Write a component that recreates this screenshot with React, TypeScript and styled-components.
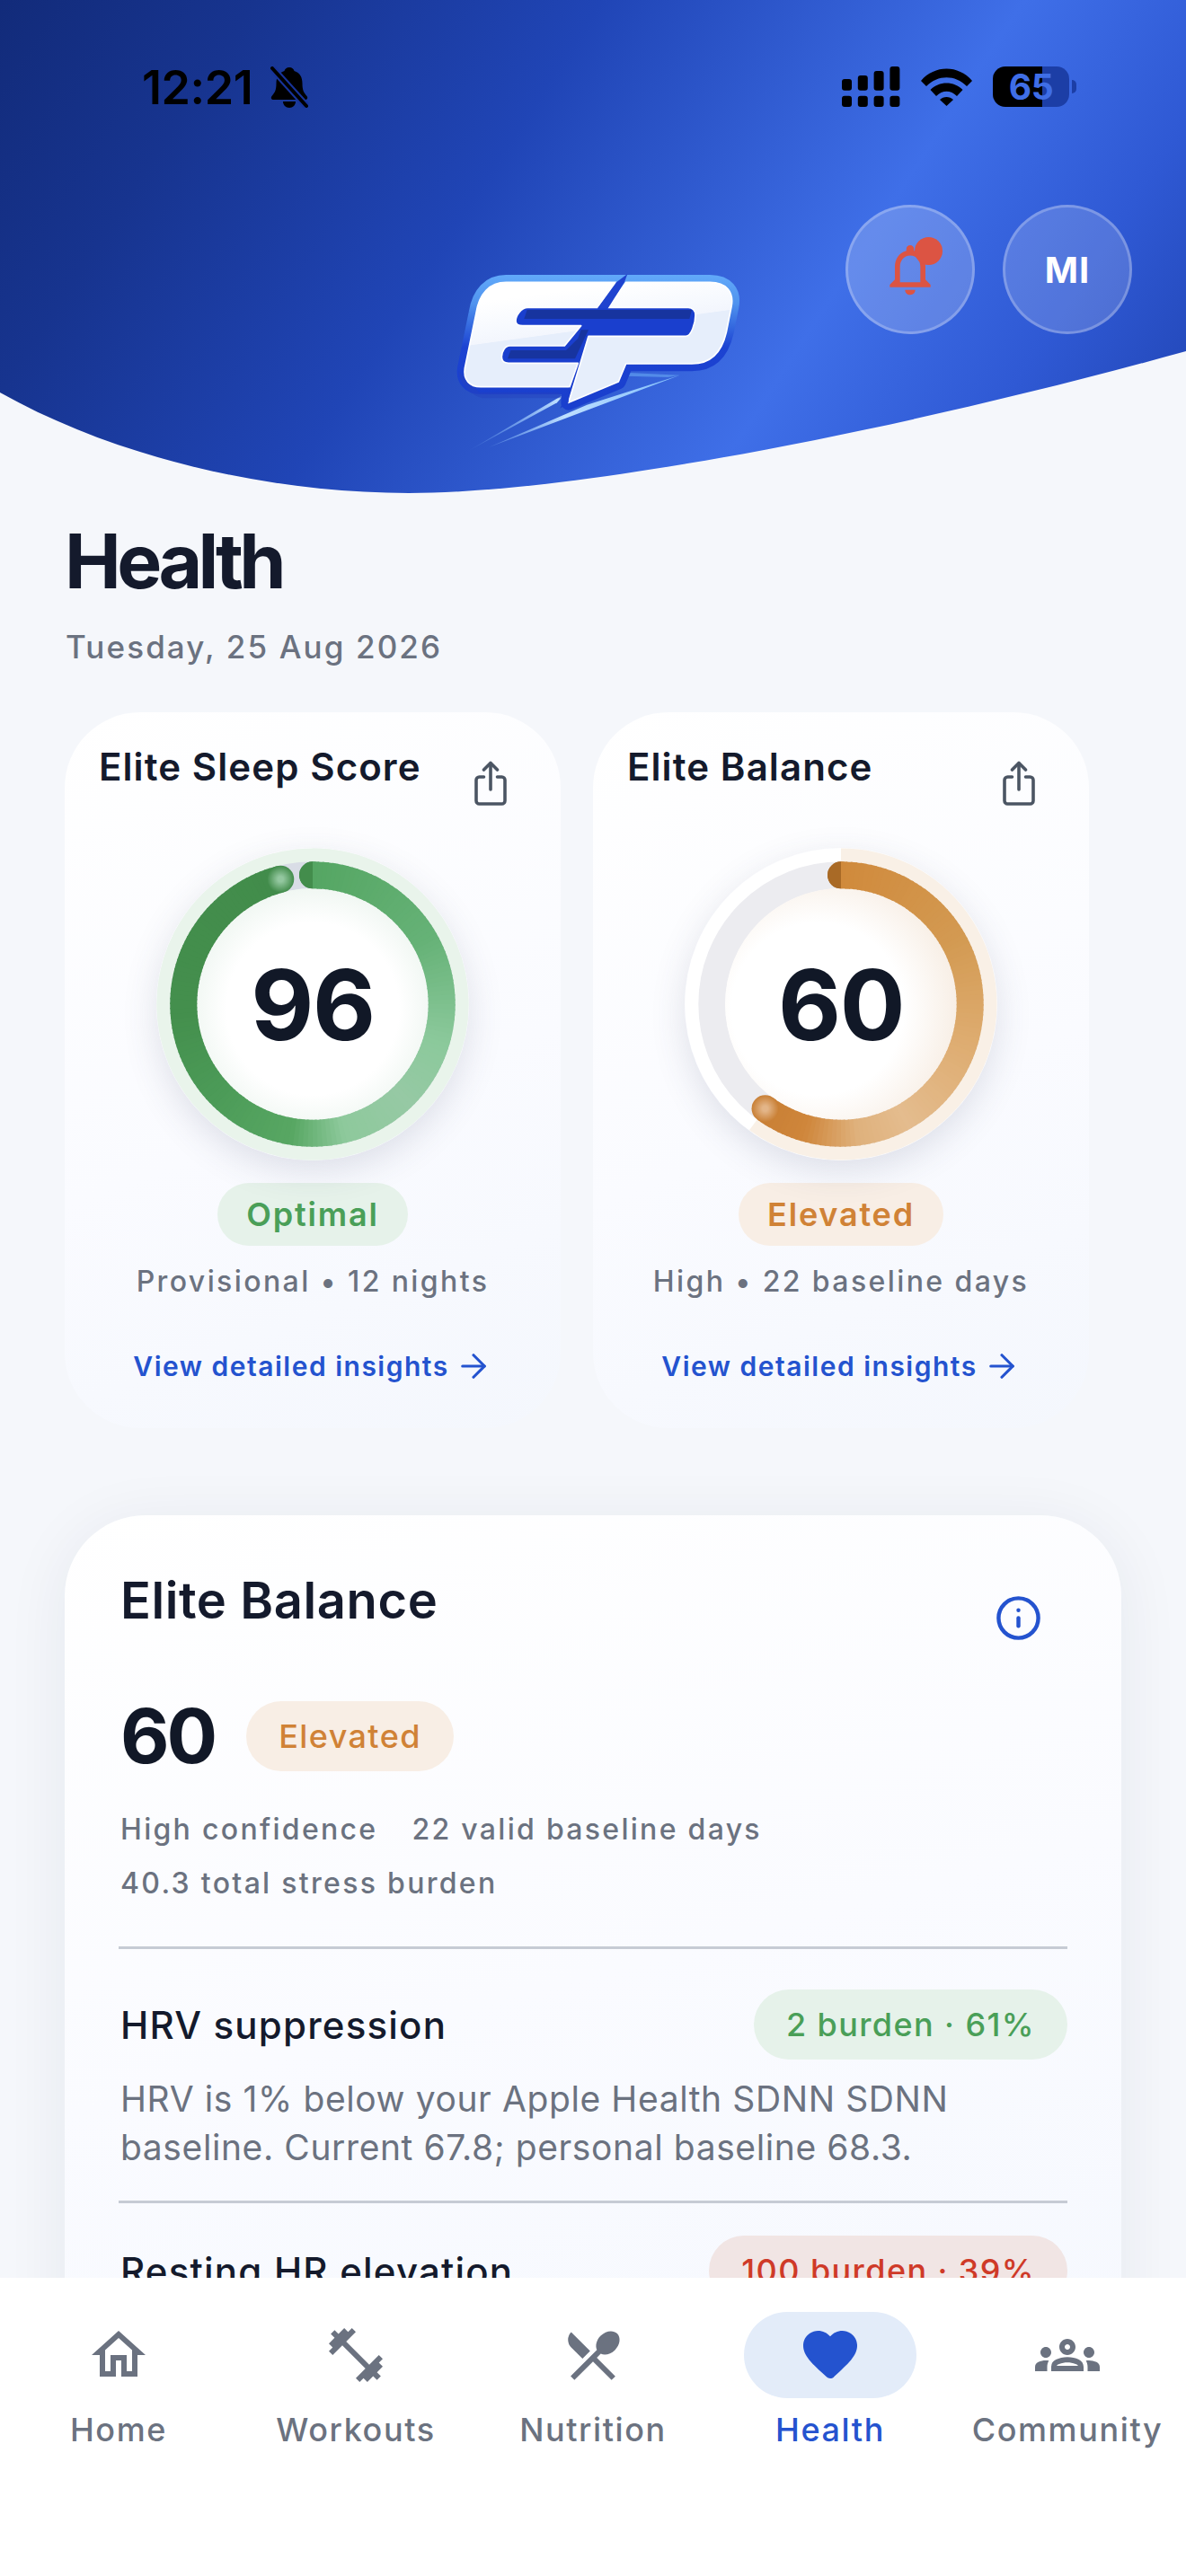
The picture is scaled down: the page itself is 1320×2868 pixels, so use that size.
import React from 'react';
import styled, { createGlobalStyle } from 'styled-components';
import { ArrowRight, Info } from 'lucide-react';
import {
  MdOutlineHome,
  MdOutlineFitnessCenter,
  MdOutlineRestaurantMenu,
  MdOutlineGroups,
  MdOutlineNotifications,
} from 'react-icons/md';

const GlobalStyle = createGlobalStyle`
  html, body {
    margin: 0;
    padding: 0;
    background: #f5f7fb;
    font-family: Inter, "Liberation Sans", sans-serif;
  }
  * { box-sizing: border-box; }
`;

const tones = {
  green: { text: '#4a9f58', bg: '#e6f2ea' },
  orange: { text: '#d08236', bg: '#f8eee5' },
  red: { text: '#cf3a28', bg: '#f1e5e4' },
};
type Tone = keyof typeof tones;

const Screen = styled.div`
  width: 1320px;
  height: 2868px;
  display: flex;
  flex-direction: column;
  overflow: hidden;
  background: #f5f7fb;
`;

const ScrollArea = styled.main`
  flex: 1;
  min-height: 0;
  overflow: hidden;
`;

const Header = styled.header`
  height: 549px;
  padding-top: 74px;
  background: linear-gradient(123deg, #122b7a 0%, #17348f 17%, #2045b6 40%, #3f6fe8 68%, #2f59d4 84%, #1f42b0 100%);
  clip-path: path('M0 0H1320V391C1000 480 640 549 455 549C300 549 130 510 0 437Z');
`;

const StatusBar = styled.div`
  display: flex;
  justify-content: space-between;
  align-items: flex-start;
  height: 50px;
  padding: 0 130px 0 158px;
`;

const StatusGroup = styled.div<{ $gap: number }>`
  display: flex;
  align-items: center;
  gap: ${({ $gap }) => $gap}px;
`;

const Clock = styled.span`
  font-size: 52px;
  line-height: 46px;
  font-weight: 600;
  letter-spacing: -0.4px;
  color: #000;
`;

const Battery = styled.div`
  position: relative;
  width: 85px;
  height: 45px;
  border-radius: 14px;
  background: linear-gradient(90deg, #000 64.7%, #1c3ea6 64.7%);
  color: #3f6ee6;
  font-size: 39px;
  line-height: 45px;
  font-weight: 700;
  text-align: center;
  letter-spacing: -0.5px;

  &::after {
    content: '';
    position: absolute;
    right: -8px;
    top: 15px;
    width: 5px;
    height: 15px;
    border-radius: 0 5px 5px 0;
    background: #1c3ea6;
  }
`;

const Hero = styled.div`
  display: grid;
  grid-template-columns: 480px 360px 1fr;
  margin-top: 104px;
`;

const LogoSlot = styled.div`
  grid-column: 2;
  margin-top: 52px;
`;

const LogoArt = styled.svg`
  display: block;
  width: 360px;
  height: 240px;
`;

const HeaderActions = styled.div`
  grid-column: 3;
  display: flex;
  justify-content: flex-end;
  gap: 31px;
  padding-right: 60px;
`;

const RoundButton = styled.button<{ $dim?: boolean }>`
  position: relative;
  width: 144px;
  height: 144px;
  padding: 0;
  border-radius: 50%;
  border: 3px solid rgba(255, 255, 255, 0.24);
  background: rgba(255, 255, 255, ${({ $dim }) => ($dim ? 0.17 : 0.2)});
  color: #fff;
  font-family: inherit;
  font-size: 40px;
  font-weight: 700;
  letter-spacing: 1px;
  display: flex;
  align-items: center;
  justify-content: center;
`;

const AlertDot = styled.span`
  position: absolute;
  top: 33px;
  left: 74px;
  width: 31px;
  height: 31px;
  border-radius: 50%;
  background: #dc5443;
`;

const PageTitle = styled.h1`
  margin: 26px 0 0 72px;
  font-size: 84px;
  line-height: 100px;
  font-weight: 700;
  letter-spacing: -4.6px;
  color: #141a2c;
`;

const DateLine = styled.p`
  margin: 20px 0 0 73px;
  font-size: 35px;
  line-height: 50px;
  font-weight: 500;
  letter-spacing: 2.1px;
  color: #6b7280;
`;

const ScoreCards = styled.section`
  display: flex;
  gap: 36px;
  margin-top: 48px;
  padding-left: 72px;
`;

const ScoreCard = styled.article`
  width: 552px;
  height: 797px;
  border-radius: 84px;
  background: linear-gradient(160deg, #ffffff 0%, #fafbff 55%, #f4f7fd 100%);
  display: flex;
  flex-direction: column;
  align-items: center;
`;

const ScoreCardHead = styled.div`
  align-self: stretch;
  display: flex;
  justify-content: space-between;
  align-items: flex-start;
  padding: 34px 60px 0 38px;
`;

const ScoreCardTitle = styled.h2`
  margin: 0;
  font-size: 42px;
  line-height: 54px;
  font-weight: 600;
  letter-spacing: 1.1px;
  color: #141a2c;
`;

const ShareGlyph = styled.svg`
  width: 36px;
  height: 50px;
  margin-top: 20px;
  fill: none;
  stroke: #4b5563;
  stroke-width: 3.6;
  stroke-linecap: round;
  stroke-linejoin: round;
`;

const GaugeFrame = styled.div`
  position: relative;
  width: 348px;
  height: 348px;
  flex-shrink: 0;
  margin-top: 47px;
  border-radius: 50%;
  box-shadow: 0 12px 38px rgba(60, 70, 100, 0.15);
`;

const GaugeArt = styled.svg`
  display: block;
  width: 348px;
  height: 348px;
`;

const GaugeValue = styled.span`
  position: absolute;
  inset: 0;
  display: flex;
  align-items: center;
  justify-content: center;
  font-size: 108px;
  font-weight: 700;
  letter-spacing: -1.5px;
  color: #111827;
`;

const ScorePill = styled.span<{ $tone: Tone }>`
  margin-top: 25px;
  height: 70px;
  padding: 0 32px;
  border-radius: 35px;
  display: flex;
  align-items: center;
  font-size: 36px;
  font-weight: 600;
  letter-spacing: 1.8px;
  color: ${({ $tone }) => tones[$tone].text};
  background: ${({ $tone }) => tones[$tone].bg};
`;

const ScoreMeta = styled.p`
  margin: 18px 0 0;
  font-size: 32px;
  line-height: 44px;
  font-weight: 500;
  letter-spacing: 2.4px;
  color: #6b7280;
`;

const InsightLink = styled.a`
  margin-top: 50px;
  display: flex;
  align-items: center;
  gap: 6px;
  font-size: 30px;
  line-height: 44px;
  font-weight: 600;
  letter-spacing: 1.5px;
  color: #2453cf;
`;

const BalanceCard = styled.section`
  margin: 97px 72px 0;
  padding: 63px 60px 140px 62px;
  border-radius: 90px;
  background: linear-gradient(165deg, #ffffff 0%, #fafbff 50%, #f5f8fe 100%);
  box-shadow: 0 10px 70px rgba(30, 40, 70, 0.07);
`;

const BalanceHead = styled.div`
  display: flex;
  justify-content: space-between;
  align-items: flex-start;
`;

const BalanceTitle = styled.h2`
  margin: 0;
  font-size: 56px;
  line-height: 64px;
  font-weight: 600;
  letter-spacing: 0.6px;
  color: #141a2c;
`;

const InfoSlot = styled.span`
  margin: 25px 28px 0 0;
  display: flex;
  color: #2453cf;
`;

const BalanceScore = styled.div`
  margin-top: 66px;
  display: flex;
  align-items: center;
  gap: 35px;
`;

const BalanceValue = styled.span`
  font-size: 84px;
  line-height: 78px;
  font-weight: 700;
  letter-spacing: -3px;
  color: #111827;
`;

const BurdenPill = styled.span<{ $tone: Tone }>`
  height: 78px;
  padding: 0 36px;
  border-radius: 39px;
  display: flex;
  align-items: center;
  font-size: 36px;
  font-weight: 500;
  letter-spacing: 1.4px;
  white-space: nowrap;
  color: ${({ $tone }) => tones[$tone].text};
  background: ${({ $tone }) => tones[$tone].bg};
`;

const BalanceFacts = styled.div`
  margin: 35px 0 40px;
  display: flex;
  flex-wrap: wrap;
  gap: 0 38px;
  max-width: 900px;
`;

const Fact = styled.span`
  font-size: 32px;
  line-height: 60px;
  font-weight: 500;
  letter-spacing: 2.3px;
  color: #6b7280;
`;

const FactBreak = styled.span`
  flex-basis: 100%;
`;

const Divider = styled.hr`
  margin: 0 0 0 -2px;
  height: 3px;
  border: 0;
  background: #c6cbd4;
`;

const FactorRow = styled.div<{ $first?: boolean }>`
  padding-top: ${({ $first }) => ($first ? 45 : 36)}px;
  display: flex;
  justify-content: space-between;
  align-items: center;
`;

const FactorName = styled.span`
  font-size: 42px;
  font-weight: 500;
  letter-spacing: 1.2px;
  color: #141a2c;
`;

const FactorText = styled.p`
  margin: 17px 0 32px;
  font-size: 39px;
  line-height: 54px;
  font-weight: 400;
  letter-spacing: 0.6px;
  color: #6b7280;
`;

const TabBar = styled.nav`
  height: 332px;
  flex-shrink: 0;
  padding-top: 38px;
  background: #fff;
  display: grid;
  grid-template-columns: repeat(5, 1fr);
  align-items: start;
`;

const Tab = styled.a<{ $active?: boolean }>`
  display: flex;
  flex-direction: column;
  align-items: center;
  color: ${({ $active }) => ($active ? '#2453cf' : '#6b7280')};
`;

const TabIcon = styled.span<{ $active?: boolean }>`
  width: 192px;
  height: 96px;
  border-radius: 48px;
  display: flex;
  align-items: center;
  justify-content: center;
  background: ${({ $active }) => ($active ? '#e3ecf9' : 'transparent')};
`;

const TabLabel = styled.span`
  margin-top: 13px;
  font-size: 36px;
  line-height: 44px;
  font-weight: 500;
  letter-spacing: 1.6px;
`;

const BellSlash = () => (
  <svg width="44" height="48" viewBox="0 0 44 48">
    <path d="M22 1c-3 0-5 2-5.500 4C10 7 7.500 12 7.500 19c0 7-1.500 10-5 14-1.500 2-.5 4 2 4h35c2.500 0 3.500-2 2-4-3.500-4-5-7-5-14 0-7-2.500-12-9-14C27 3 25 1 22 1Z" fill="#000" />
    <path d="M15 39h14c0 4-3 7-7 7s-7-3-7-7Z" fill="#000" />
    <path d="M3 2 41 44" stroke="#17339a" strokeWidth="8" />
    <path d="M3 2 41 44" stroke="#000" strokeWidth="4" strokeLinecap="round" />
  </svg>
);

const SignalBars = () => (
  <svg width="65" height="45" viewBox="0 0 65 45" fill="#000">
    {[14, 10, 5, 0].map((top, i) => (
      <g key={top}>
        <rect x={i * 17.8} y={top} width="11" height={26.7 - top} rx="3" />
        <rect x={i * 17.8} y="32.700" width="11" height="12.300" rx="3" />
      </g>
    ))}
  </svg>
);

const WifiGlyph = () => (
  <svg width="57" height="42" viewBox="0 0 57 42" fill="#000">
    <path d="M0 14C15-4 42-4 57 14L51 20C38 7 19 7 6 20Z" />
    <path d="M10.500 24C20 14 37 14 46.500 24L40 31C33 24 24 24 17 31Z" />
    <path d="M21 35C25 31 32 31 36 35L28.500 42Z" />
  </svg>
);

// traced from the brand mark, 3x units so the crop coordinates stay readable
const letterE =
  'M250 103H617L555 187H322C300 187 282 215 282 232C282 244 292 248 305 248H500L445 315H262C246 315 235 335 235 352C235 366 244 373 258 373H490L462 452H165C128 452 106 428 112 390L150 205C160 140 195 103 250 103Z';
const letterP =
  'M650 103H930C985 103 1012 135 1002 185L985 270C970 335 935 375 870 375H650L625 435L458 505L525 283H850C868 283 882 240 882 212C882 198 872 187 858 187H590Z';

const EpLogo = () => (
  <LogoArt viewBox="0 0 1080 720">
    <defs>
      <linearGradient id="logoRim" x1="0" y1="75" x2="0" y2="480" gradientUnits="userSpaceOnUse">
        <stop offset="0" stopColor="#62aafa" />
        <stop offset="0.25" stopColor="#4f92ee" />
        <stop offset="0.6" stopColor="#1c43d2" />
        <stop offset="1" stopColor="#1a3fce" />
      </linearGradient>
      <linearGradient id="logoFace" x1="520" y1="120" x2="550" y2="340" gradientUnits="userSpaceOnUse">
        <stop offset="0" stopColor="#ffffff" />
        <stop offset="0.45" stopColor="#f6f9fe" />
        <stop offset="0.62" stopColor="#f3f6fd" />
        <stop offset="0.63" stopColor="#e6eefb" />
        <stop offset="1" stopColor="#e6eefb" />
      </linearGradient>
      <linearGradient id="logoStreak" x1="130" y1="665" x2="830" y2="415" gradientUnits="userSpaceOnUse">
        <stop offset="0" stopColor="#7fbcff" stopOpacity="0.1" />
        <stop offset="0.45" stopColor="#bfe0ff" />
        <stop offset="1" stopColor="#7fbdfc" />
      </linearGradient>
    </defs>
    <path d="M125 665 445 476 420 505Z" fill="url(#logoStreak)" />
    <path d="M190 655 830 413 520 512Z" fill="url(#logoStreak)" />
    <path d="M660 405 830 413 790 420 650 416Z" fill="#5f9df0" opacity="0.7" />
    <path d="M250 103H930C985 103 1012 135 1002 185L985 270C970 335 935 375 870 375H650L625 435L458 505L462 452H165C128 452 106 428 112 390L150 205C160 140 195 103 250 103Z" fill="#1a3fce" stroke="url(#logoRim)" strokeWidth="50" strokeLinejoin="round" />
    <path d="M90 400C100 450 130 478 170 490H440L425 470H160Z" fill="#2342bd" opacity="0.5" />
    <path d="M320 195H870L862 225H310Z" fill="#17349f" />
    <path d="M265 330H450L490 290 500 262 525 262 480 358H255Z" fill="#17349f" />
    <path d={letterE} fill="url(#logoFace)" stroke="#fff" strokeWidth="5" strokeLinejoin="round" />
    <path d={letterP} fill="url(#logoFace)" stroke="#fff" strokeWidth="5" strokeLinejoin="round" />
    <path d="M655 75 618 103 555 190 590 190 645 103Z" fill="#1f43cf" />
    <path d="M462 452 430 524 458 505Z" fill="#1a3fce" />
  </LogoArt>
);

const ShareIcon = () => (
  <ShareGlyph viewBox="0 0 36 50">
    <path d="M10.500 18H5.500a3.500 3.500 0 0 0-3.500 3.500v23a3.500 3.500 0 0 0 3.500 3.500h25a3.500 3.500 0 0 0 3.500-3.500v-23a3.500 3.500 0 0 0-3.500-3.500H25.500" />
    <path d="M18 3v29" />
    <path d="M10.500 10 18 2.500 25.500 10" />
  </ShareGlyph>
);

const RoundedHeart = () => (
  <svg width="72" height="72" viewBox="0 0 24 24" fill="currentColor">
    <path d="M13.350 20.130c-.76.69-1.930.69-2.690-.01l-.11-.1C5.300 15.270 1.870 12.160 2 8.280c.06-1.700.93-3.330 2.340-4.290 2.640-1.800 5.900-.96 7.660 1.100 1.760-2.060 5.020-2.910 7.660-1.100 1.410.96 2.280 2.590 2.340 4.290.14 3.880-3.300 6.990-8.550 11.760l-.1.090z" />
  </svg>
);

type GaugeProps = {
  id: string;
  score: number;
  sweep: number;
  stops: [number, string][];
  halo: string;
  haloRest: string;
  track: string;
  startCap: string;
  endCap: string;
  endGlow: string;
  innerEdge: string;
  innerCx: number;
};

const hexToRgb = (hex: string) => [1, 3, 5].map((i) => parseInt(hex.slice(i, i + 2), 16));

// the ring colour runs round the circle, so it is sampled per slice
const sampleStops = (stops: [number, string][], deg: number) => {
  for (let i = 1; i < stops.length; i += 1) {
    if (deg <= stops[i][0]) {
      const t = (deg - stops[i - 1][0]) / (stops[i][0] - stops[i - 1][0]);
      const a = hexToRgb(stops[i - 1][1]);
      const b = hexToRgb(stops[i][1]);
      return `rgb(${a.map((v, k) => Math.round(v + (b[k] - v) * t)).join(',')})`;
    }
  }
  return stops[stops.length - 1][1];
};

const polar = (r: number, deg: number) => {
  const rad = (deg * Math.PI) / 180;
  return [174 + r * Math.sin(rad), 174 - r * Math.cos(rad)];
};

const arc = (r: number, from: number, to: number) => {
  const [x1, y1] = polar(r, from);
  const [x2, y2] = polar(r, to);
  const large = to - from > 180 ? 1 : 0;
  return `M${x1} ${y1}A${r} ${r} 0 ${large} 1 ${x2} ${y2}`;
};

const Gauge = ({ id, score, sweep, stops, halo, haloRest, track, startCap, endCap, endGlow, innerEdge, innerCx }: GaugeProps) => {
  const slices = [];
  for (let deg = 0; deg < sweep; deg += 2) {
    slices.push(
      <path key={deg} d={arc(143.7, deg, Math.min(deg + 2.6, sweep))} stroke={sampleStops(stops, deg)} strokeWidth="30" fill="none" />,
    );
  }
  const [startX, startY] = polar(143.7, 0);
  const [endX, endY] = polar(143.7, sweep);
  return (
    <GaugeFrame>
      <GaugeArt viewBox="0 0 348 348">
        <defs>
          <radialGradient id={`${id}-inner`} cx={innerCx} cy="0.52" r="0.6">
            <stop offset="0.62" stopColor="#ffffff" />
            <stop offset="1" stopColor={innerEdge} />
          </radialGradient>
          <radialGradient id={`${id}-glow`}>
            <stop offset="0.2" stopColor={endGlow} />
            <stop offset="1" stopColor={endGlow} stopOpacity="0" />
          </radialGradient>
        </defs>
        <circle cx="174" cy="174" r="173.500" fill={haloRest} />
        {sweep < 360 && <path d={arc(166, 0, sweep)} stroke={halo} strokeWidth="15" fill="none" />}
        <circle cx="174" cy="174" r="143.700" stroke={track} strokeWidth="30" fill="none" />
        <circle cx="174" cy="174" r="129" fill={`url(#${id}-inner)`} />
        <circle cx={startX} cy={startY} r="15" fill={startCap} />
        <circle cx={endX} cy={endY} r="15" fill={endCap} />
        {slices}
        <path d={`M${startX} ${startY - 15}a15 15 0 0 0 0 30Z`} fill={startCap} />
        <circle cx={endX} cy={endY} r="15" fill={`url(#${id}-glow)`} />
      </GaugeArt>
      <GaugeValue>{score}</GaugeValue>
    </GaugeFrame>
  );
};

const greenStops: [number, string][] = [
  [0, '#55a663'],
  [60, '#66b277'],
  [105, '#8bc99b'],
  [135, '#96c9a4'],
  [165, '#8ec99c'],
  [188, '#58a763'],
  [225, '#4c9b58'],
  [265, '#448f4d'],
  [346, '#428c4b'],
];

const orangeStops: [number, string][] = [
  [0, '#d08a3c'],
  [60, '#d39a52'],
  [105, '#deac70'],
  [150, '#e4bc8e'],
  [172, '#dfb17c'],
  [195, '#cf863b'],
  [216, '#c87f35'],
];

const LinkRow = () => (
  <InsightLink>
    View detailed insights
    <ArrowRight size={42} strokeWidth={1.8} />
  </InsightLink>
);

const App: React.FC = () => (
  <Screen>
    <GlobalStyle />
    <ScrollArea>
      <Header>
        <StatusBar>
          <StatusGroup $gap={19}>
            <Clock>12:21</Clock>
            <BellSlash />
          </StatusGroup>
          <StatusGroup $gap={23}>
            <SignalBars />
            <WifiGlyph />
            <Battery>65</Battery>
          </StatusGroup>
        </StatusBar>
        <Hero>
          <LogoSlot>
            <EpLogo />
          </LogoSlot>
          <HeaderActions>
            <RoundButton>
              <MdOutlineNotifications size={68} color="#dc5443" />
              <AlertDot />
            </RoundButton>
            <RoundButton $dim>MI</RoundButton>
          </HeaderActions>
        </Hero>
      </Header>

      <PageTitle>Health</PageTitle>
      <DateLine>Tuesday, 25 Aug 2026</DateLine>

      <ScoreCards>
        <ScoreCard>
          <ScoreCardHead>
            <ScoreCardTitle>Elite Sleep Score</ScoreCardTitle>
            <ShareIcon />
          </ScoreCardHead>
          <Gauge
            id="sleep"
            score={96}
            sweep={345.6}
            stops={greenStops}
            halo="#e9f4eb"
            haloRest="#e9f4eb"
            track="#d9dde6"
            startCap="#438d4c"
            endCap="#428c4b"
            endGlow="#93c79f"
            innerEdge="#e9f3ec"
            innerCx={0.5}
          />
          <ScorePill $tone="green">Optimal</ScorePill>
          <ScoreMeta>Provisional • 12 nights</ScoreMeta>
          <LinkRow />
        </ScoreCard>
        <ScoreCard>
          <ScoreCardHead>
            <ScoreCardTitle>Elite Balance</ScoreCardTitle>
            <ShareIcon />
          </ScoreCardHead>
          <Gauge
            id="balance"
            score={60}
            sweep={216}
            stops={orangeStops}
            halo="#f9f0e6"
            haloRest="#ffffff"
            track="#ececf0"
            startCap="#a96a26"
            endCap="#c87f35"
            endGlow="#e3b588"
            innerEdge="#f8efe6"
            innerCx={0.4}
          />
          <ScorePill $tone="orange">Elevated</ScorePill>
          <ScoreMeta>High • 22 baseline days</ScoreMeta>
          <LinkRow />
        </ScoreCard>
      </ScoreCards>

      <BalanceCard>
        <BalanceHead>
          <BalanceTitle>Elite Balance</BalanceTitle>
          <InfoSlot>
            <Info size={53} strokeWidth={2} />
          </InfoSlot>
        </BalanceHead>
        <BalanceScore>
          <BalanceValue>60</BalanceValue>
          <BurdenPill $tone="orange">Elevated</BurdenPill>
        </BalanceScore>
        <BalanceFacts>
          <Fact>High confidence</Fact>
          <Fact>22 valid baseline days</Fact>
          <FactBreak />
          <Fact>40.3 total stress burden</Fact>
        </BalanceFacts>
        <Divider />
        <FactorRow $first>
          <FactorName>HRV suppression</FactorName>
          <BurdenPill $tone="green">2 burden · 61%</BurdenPill>
        </FactorRow>
        <FactorText>
          HRV is 1% below your Apple Health SDNN SDNN
          <br />
          baseline. Current 67.8; personal baseline 68.3.
        </FactorText>
        <Divider />
        <FactorRow>
          <FactorName>Resting HR elevation</FactorName>
          <BurdenPill $tone="red">100 burden · 39%</BurdenPill>
        </FactorRow>
      </BalanceCard>
    </ScrollArea>

    <TabBar>
      <Tab>
        <TabIcon>
          <MdOutlineHome size={72} />
        </TabIcon>
        <TabLabel>Home</TabLabel>
      </Tab>
      <Tab>
        <TabIcon>
          <MdOutlineFitnessCenter size={72} />
        </TabIcon>
        <TabLabel>Workouts</TabLabel>
      </Tab>
      <Tab>
        <TabIcon>
          <MdOutlineRestaurantMenu size={72} />
        </TabIcon>
        <TabLabel>Nutrition</TabLabel>
      </Tab>
      <Tab $active>
        <TabIcon $active>
          <RoundedHeart />
        </TabIcon>
        <TabLabel>Health</TabLabel>
      </Tab>
      <Tab>
        <TabIcon>
          <MdOutlineGroups size={72} />
        </TabIcon>
        <TabLabel>Community</TabLabel>
      </Tab>
    </TabBar>
  </Screen>
);

export default App;
